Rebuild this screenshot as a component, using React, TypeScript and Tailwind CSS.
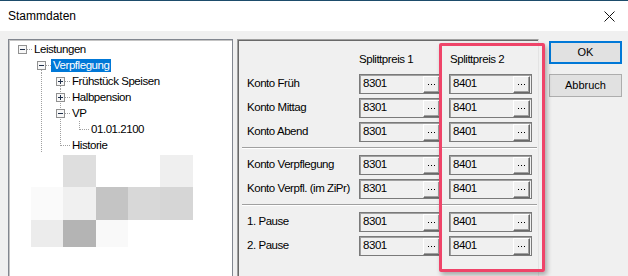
import React from "react";

type Cell = { v?: "full" | "top" | "bottom"; h?: boolean; box?: "+" | "-" };

interface TreeRow {
    cells: Cell[];
    text: string;
    sel?: boolean;
}

const treeRows: TreeRow[] = [
    { cells: [{ box: "-", h: true }], text: "Leistungen" },
    { cells: [{}, { box: "-", h: true, v: "bottom" }], text: "Verpflegung", sel: true },
    { cells: [{}, { v: "full" }, { box: "+", h: true, v: "bottom" }], text: "Frühstück Speisen" },
    { cells: [{}, { v: "full" }, { box: "+", h: true, v: "full" }], text: "Halbpension" },
    { cells: [{}, { v: "full" }, { box: "-", h: true, v: "full" }], text: "VP" },
    { cells: [{}, { v: "full" }, { v: "full" }, { v: "top", h: true }], text: "01.01.2100" },
    { cells: [{}, { v: "full" }, { v: "top", h: true }], text: "Historie" },
];

// blurred area below the tree
const mosaic = [
    ["#ffffff", "#dedede", "#ffffff", "#ffffff", "#efefef"],
    ["#fafafa", "#f0f0f0", "#c4c4c4", "#d8d8d8", "#d6d6d6"],
    ["#ececec", "#b4b4b4", "#f9f9f9", "#ffffff", "#ffffff"],
];

const groups = [
    ["Konto Früh", "Konto Mittag", "Konto Abend"],
    ["Konto Verpflegung", "Konto Verpfl. (im ZiPr)"],
    ["1. Pause", "2. Pause"],
];

function TreeCell({ cell }: { cell: Cell }) {
    const dots = { stroke: "#a0a0a0", strokeWidth: 1, strokeDasharray: "1 1" };
    return (
        <svg width="19" height="16" viewBox="0 0 19 16" className="shrink-0">
            {cell.v === "full" && <line x1="9.5" y1="0" x2="9.5" y2="16" {...dots} />}
            {cell.v === "top" && <line x1="9.5" y1="0" x2="9.5" y2="9" {...dots} />}
            {cell.v === "bottom" && <line x1="9.5" y1="9" x2="9.5" y2="16" {...dots} />}
            {cell.h && <line x1="10" y1="8.5" x2="19" y2="8.5" {...dots} />}
            {cell.box && (
                <>
                    <rect x="5.5" y="4.5" width="8" height="8" fill="#f7f7f7" stroke="#919191" />
                    <line x1="7" y1="8.5" x2="12" y2="8.5" stroke="#1f2f4a" />
                    {cell.box === "+" && <line x1="9.5" y1="6" x2="9.5" y2="11" stroke="#1f2f4a" />}
                </>
            )}
        </svg>
    );
}

function Dots() {
    return (
        <svg width="9" height="3" viewBox="0 0 9 3">
            <rect x="1" y="1" width="1" height="1" fill="#000" />
            <rect x="4" y="1" width="1" height="1" fill="#000" />
            <rect x="7" y="1" width="1" height="1" fill="#000" />
        </svg>
    );
}

function Field({ value }: { value: string }) {
    return (
        <div className="w-[83px] h-[20px] flex items-center border border-[#7a7a7a] shadow-[inset_1px_1px_0_#a0a0a0] bg-[#f0f0f0]">
            <span className="flex-1 pl-[3px] leading-none">{value}</span>
            <div className="w-[17px] h-[17px] mr-[1px] flex items-center justify-center bg-[#f0f0f0] border-t border-l border-t-white border-l-white border-b border-r border-b-[#696969] border-r-[#696969] shadow-[inset_-1px_-1px_0_#a0a0a0]">
                <Dots />
            </div>
        </div>
    );
}

export default function App() {
    return (
        <div className="relative w-[628px] h-[276px] overflow-hidden bg-[#f0f0f0] text-black text-[11.5px] tracking-[-0.45px] font-['Liberation_Sans',Arial,sans-serif]">
            {/* Title bar */}
            <div className="h-[31px] bg-white border-t border-[#1d4c6b] flex items-center justify-between pl-[8px] pr-[13px]">
                <span className="text-[12px] tracking-normal">Stammdaten</span>
                <svg width="11" height="11" viewBox="0 0 11 11">
                    <path d="M0.5 0.5 L10.5 10.5 M10.5 0.5 L0.5 10.5" stroke="#111" strokeWidth="1" />
                </svg>
            </div>

            <div className="flex pt-[8px] pl-[8px]">
                {/* Tree */}
                <div className="w-[225px] h-[260px] bg-white border border-[#828790] shadow-[inset_1px_1px_0_#c4c4c4] pt-[1px] pl-[4px]">
                    {treeRows.map((row) => (
                        <div key={row.text} className="flex items-center h-[16px]">
                            {row.cells.map((c, i) => (
                                <TreeCell key={i} cell={c} />
                            ))}
                            <span
                                className={
                                    row.sel
                                        ? "h-[13px] leading-[13px] px-[2px] bg-[#0078d7] text-white"
                                        : "h-[13px] leading-[13px] px-[2px]"
                                }
                            >
                                {row.text}
                            </span>
                        </div>
                    ))}
                    <div className="mt-[2px] ml-[18px] grid grid-cols-[32px_33px_32px_32px_33px] grid-rows-[32px_33px_27px]">
                        {mosaic.flat().map((c, i) => (
                            <div key={i} style={{ backgroundColor: c }} />
                        ))}
                    </div>
                </div>

                {/* Account panel */}
                <div className="ml-[4px] w-[302px] h-[260px] border-t border-l border-[#a0a0a0] border-r border-r-[#e3e3e3] shadow-[inset_1px_1px_0_#696969] pl-[9px] pt-[13px]">
                    <div className="flex h-[14px] items-center">
                        <span className="w-[112px]" />
                        <span className="w-[90px]">Splittpreis 1</span>
                        <span className="pl-[1px]">Splittpreis 2</span>
                    </div>
                    <div className="mt-[7px]">
                        {groups.map((g, gi) => (
                            <div key={gi}>
                                {gi > 0 && (
                                    <div className="mt-[5px] mb-[6px] -ml-[5px] mr-[1px] h-[2px] border-t border-[#a0a0a0] border-b border-b-white" />
                                )}
                                <div className="flex flex-col gap-[4px]">
                                    {g.map((label) => (
                                        <div key={label} className="flex items-center h-[20px]">
                                            <span className="w-[112px]">{label}</span>
                                            <Field value="8301" />
                                            <div className="w-[7px]" />
                                            <Field value="8401" />
                                        </div>
                                    ))}
                                </div>
                            </div>
                        ))}
                    </div>
                </div>

                {/* Buttons */}
                <div className="ml-[10px] pt-[2px] flex flex-col gap-[10px] text-[11px] tracking-normal">
                    <button className="w-[73px] h-[23px] bg-[#e1e1e1] border-2 border-[#0078d7] flex items-center justify-center">
                        OK
                    </button>
                    <button className="w-[73px] h-[23px] bg-[#e1e1e1] border border-[#adadad] flex items-center justify-center">
                        Abbruch
                    </button>
                </div>
            </div>

            {/* red highlight around column 2 */}
            <div className="absolute left-[439px] top-[43px] w-[106px] h-[229px] border-[3px] border-[#ef4469] rounded-[2px] shadow-[2px_3px_5px_rgba(0,0,0,0.3)]" />
        </div>
    );
}
